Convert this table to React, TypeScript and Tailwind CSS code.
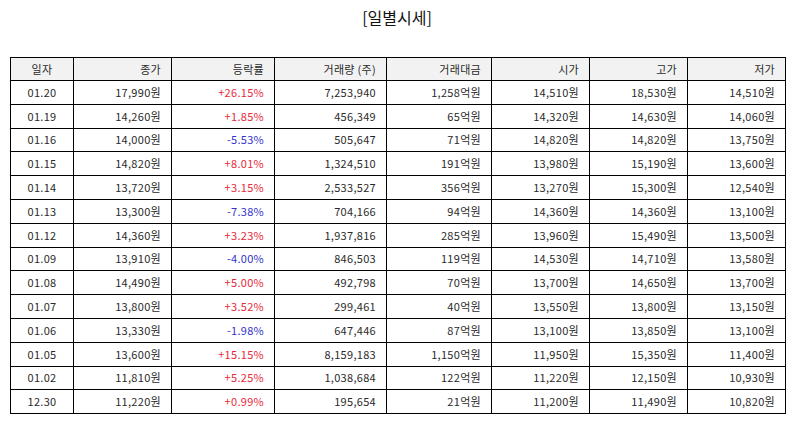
import React from 'react';

type Row = {
    date: string;
    close: string;
    rate: string;
    volume: string;
    amount: string;
    open: string;
    high: string;
    low: string;
};

const ROWS: Row[] = [
    { date: '01.20', close: '17,990원', rate: '+26.15%', volume: '7,253,940', amount: '1,258억원', open: '14,510원', high: '18,530원', low: '14,510원' },
    { date: '01.19', close: '14,260원', rate: '+1.85%', volume: '456,349', amount: '65억원', open: '14,320원', high: '14,630원', low: '14,060원' },
    { date: '01.16', close: '14,000원', rate: '-5.53%', volume: '505,647', amount: '71억원', open: '14,820원', high: '14,820원', low: '13,750원' },
    { date: '01.15', close: '14,820원', rate: '+8.01%', volume: '1,324,510', amount: '191억원', open: '13,980원', high: '15,190원', low: '13,600원' },
    { date: '01.14', close: '13,720원', rate: '+3.15%', volume: '2,533,527', amount: '356억원', open: '13,270원', high: '15,300원', low: '12,540원' },
    { date: '01.13', close: '13,300원', rate: '-7.38%', volume: '704,166', amount: '94억원', open: '14,360원', high: '14,360원', low: '13,100원' },
    { date: '01.12', close: '14,360원', rate: '+3.23%', volume: '1,937,816', amount: '285억원', open: '13,960원', high: '15,490원', low: '13,500원' },
    { date: '01.09', close: '13,910원', rate: '-4.00%', volume: '846,503', amount: '119억원', open: '14,530원', high: '14,710원', low: '13,580원' },
    { date: '01.08', close: '14,490원', rate: '+5.00%', volume: '492,798', amount: '70억원', open: '13,700원', high: '14,650원', low: '13,700원' },
    { date: '01.07', close: '13,800원', rate: '+3.52%', volume: '299,461', amount: '40억원', open: '13,550원', high: '13,800원', low: '13,150원' },
    { date: '01.06', close: '13,330원', rate: '-1.98%', volume: '647,446', amount: '87억원', open: '13,100원', high: '13,850원', low: '13,100원' },
    { date: '01.05', close: '13,600원', rate: '+15.15%', volume: '8,159,183', amount: '1,150억원', open: '11,950원', high: '15,350원', low: '11,400원' },
    { date: '01.02', close: '11,810원', rate: '+5.25%', volume: '1,038,684', amount: '122억원', open: '11,220원', high: '12,150원', low: '10,930원' },
    { date: '12.30', close: '11,220원', rate: '+0.99%', volume: '195,654', amount: '21억원', open: '11,200원', high: '11,490원', low: '10,820원' },
];

const HEADERS = ['종가', '등락률', '거래량 (주)', '거래대금', '시가', '고가', '저가'];

const cell = 'border border-black h-[23.8px] px-[10px] text-right';

export default function App() {
    return (
        <div className="w-[794px] h-[425px] bg-white text-[11px] tracking-[0.3px] text-[#2a2a2a] font-['Noto_Sans_CJK_KR','Noto_Sans',sans-serif]">
            {/* 제목 */}
            <div className="pt-[6px] h-[57px] text-center text-[16px] leading-[22px] tracking-normal text-[#111]">[일별시세]</div>

            <table className="ml-[10px] w-[775px] table-fixed border-collapse leading-none">
                <colgroup>
                    <col className="w-[63px]" />
                    <col className="w-[98px]" />
                    <col className="w-[103px]" />
                    <col className="w-[112px]" />
                    <col className="w-[105px]" />
                    <col className="w-[98px]" />
                    <col className="w-[98px]" />
                    <col className="w-[98px]" />
                </colgroup>
                <thead>
                    <tr className="bg-[#f2f2f2]">
                        <th className="border border-black h-[23px] font-normal text-center">일자</th>
                        {HEADERS.map(h => (
                            <th key={h} className="border border-black h-[23px] px-[10px] font-normal text-right">{h}</th>
                        ))}
                    </tr>
                </thead>
                <tbody>
                    {ROWS.map(r => (
                        <tr key={r.date}>
                            <td className="border border-black h-[23.8px] text-center">{r.date}</td>
                            <td className={cell}>{r.close}</td>
                            <td className={`${cell} ${r.rate.startsWith('-') ? 'text-[#3333cc]' : 'text-[#e8283c]'}`}>{r.rate}</td>
                            <td className={cell}>{r.volume}</td>
                            <td className={cell}>{r.amount}</td>
                            <td className={cell}>{r.open}</td>
                            <td className={cell}>{r.high}</td>
                            <td className={cell}>{r.low}</td>
                        </tr>
                    ))}
                </tbody>
            </table>
        </div>
    );
}
